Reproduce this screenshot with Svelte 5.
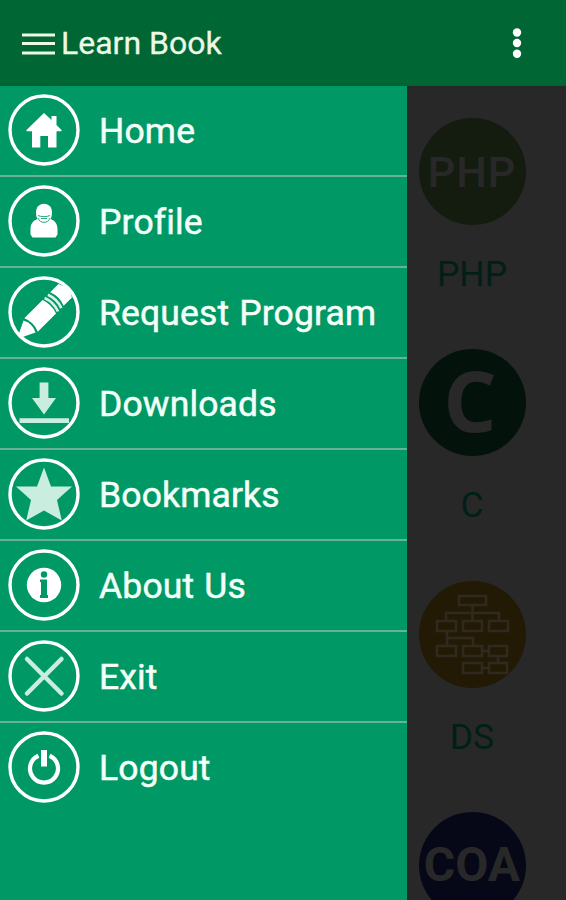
<script lang="ts">
  const items = [
    { name: 'Home', icon: 'home' },
    { name: 'Profile', icon: 'profile' },
    { name: 'Request Program', icon: 'pencil' },
    { name: 'Downloads', icon: 'download' },
    { name: 'Bookmarks', icon: 'star' },
    { name: 'About Us', icon: 'info' },
    { name: 'Exit', icon: 'exit' },
    { name: 'Logout', icon: 'power' }
  ];
</script>

<div class="app">
  <header>
    <svg class="burger" width="33" height="24" viewBox="0 0 33 24">
      <path d="M0 3H33M0 11.500H33M0 21H33" stroke="#eef8e6" stroke-width="2.800" />
    </svg>
    <h1>Learn Book</h1>
    <svg class="dots" width="10" height="32" viewBox="0 0 10 32" fill="#fff">
      <circle cx="5" cy="4.500" r="4.200" />
      <circle cx="5" cy="15" r="4.200" />
      <circle cx="5" cy="25.700" r="4.200" />
    </svg>
  </header>

  <main>
    <nav>
      {#each items as item}
        <div class="row">
          <svg width="72" height="72" viewBox="-36 -36 72 72" fill="#fff">
            <circle r="34" fill="none" stroke="#fff" stroke-width="3.400" />
            {#if item.icon === 'home'}
              <path d="M0-17L7.500-10V-14H12.500V-5L17.500 0V1.300H12.500V17.500H4V6H-3.700V17.500H-12V1.300H-17.500V0Z" />
            {:else if item.icon === 'profile'}
              <path d="M0-17.300C5-17.300 8-13.500 8-8.500C8-5 7-2 5.500-.3C3 2.500-3 2.500-5.500-.3C-7-2-8-5-8-8.500C-8-13.500-5-17.300 0-17.300Z" />
              <path d="M-6.500-2C-11-.5-13.500 3-13.500 8V13.500L-11.500 16.500H11.500L13.500 13.500V8C13.500 3 11-.5 6.500-2C4 2.800-4 2.800-6.500-2Z" />
              <path d="M-6-5.500C-3-4 3-4 6-5.500M-3-2.500H3M-6-3C-4 2.800 4 2.800 6-3" fill="none" stroke="#2ca87c" stroke-width="1" />
            {:else if item.icon === 'pencil'}
              <g transform="rotate(-45)">
                <path d="M-35-1.500L-20.500-8.500Q-16 0-20.500 8.500L-35 1.500Z" />
                <path d="M-18.300-9.500H7.500Q11 0 7.500 9.500H-18.300Q-14 0-18.300-9.500Z" />
                <path d="M10.300-9.500Q14 0 10.300 9.500M15-9.500Q18.700 0 15 9.500" fill="none" stroke="#d8f1e6" stroke-width="2.700" />
                <path d="M18.300-9.500H30Q33-4 33 0Q33 5 30 9.500H18.300Q22 0 18.300-9.500Z" />
              </g>
            {:else if item.icon === 'download'}
              <path class="pale" d="M-4.400-20.500H4.400V-5H12L0 11.500L-12-5H-4.400ZM-24.500 15.200H25V20H-24.500Z" />
            {:else if item.icon === 'star'}
              <path class="pale" d="M0-26.500L7-7.500H28L13 6L17.800 26.500L0 16.500L-17.800 26.500L-13 6L-28-7.500H-7Z" />
            {:else if item.icon === 'info'}
              <circle r="17.200" />
              <circle cy="-10.500" r="3.200" fill="#096" />
              <path d="M-4-5.500H3V10H4V13H-4V10H-3V-3H-4Z" fill="#096" />
            {:else if item.icon === 'exit'}
              <path d="M-17-17L17.500 17.500M17.500-17L-17 17.500" stroke="#c9eedf" stroke-width="4.500" stroke-linecap="round" />
            {:else}
              <path d="M-5.500-11.300A14 14 0 1 0 5.500-11.300" fill="none" stroke="#fff" stroke-width="4.200" />
              <path d="M-3-17H3V-.5H-3Z" />
            {/if}
          </svg>
          <span>{item.name}</span>
        </div>
      {/each}
    </nav>

    <section>
      <div class="course">
        <div class="disc php">PHP</div>
        <p>PHP</p>
      </div>
      <div class="course">
        <div class="disc c">C</div>
        <p>C</p>
      </div>
      <div class="course">
        <div class="disc ds">
          <svg width="106" height="106" viewBox="0 0 106 106" fill="none" stroke="#30291f" stroke-width="2.600">
            <path d="M40 15H67V24H40ZM18 40H37V50H18ZM44 40H63V50H44ZM70 40H89V50H70ZM18 65H37V75H18ZM44 65H63V75H44ZM70 65H88V75H70ZM44 82H63V92H44ZM70 82H88V92H70Z" />
            <path d="M53.500 24V40M27 40V32H80V40M28 50V65M28 57H54V65M63 70H70M79 75V82M63 87H70" />
          </svg>
        </div>
        <p>DS</p>
      </div>
      <div class="course">
        <div class="disc coa">COA</div>
      </div>
    </section>
  </main>
</div>

<style>
  :global(body) {
    background: #282828;
    overflow: hidden;
  }
  .app {
    display: flex;
    flex-direction: column;
    width: 566px;
    height: 900px;
    overflow: hidden;
    font-family: Roboto, "Liberation Sans", sans-serif;
  }
  header {
    display: flex;
    flex: none;
    align-items: center;
    box-sizing: border-box;
    height: 86px;
    padding: 2px 44px 0 22px;
    background: #063;
    border-bottom: 1px solid #005f38;
  }
  h1 {
    margin: 0 auto 0 6px;
    padding-bottom: 1px;
    color: #eef8e6;
    font-size: 32px;
    font-weight: 400;
    line-height: 40px;
    -webkit-text-stroke: 0.3px #eef8e6;
  }
  main {
    display: flex;
    flex: 1;
    min-height: 0;
  }
  nav {
    width: 407px;
    flex: none;
    background: #096;
  }
  .row {
    display: flex;
    align-items: center;
    gap: 19px;
    height: 89px;
    padding-left: 8px;
    border-bottom: 2px solid #69b194;
    color: #f4fff8;
    font-size: 35.5px;
    line-height: 42px;
    white-space: nowrap;
  }
  .row:last-child {
    border-bottom: none;
  }
  .row svg {
    margin-bottom: 1px;
  }
  .row span {
    letter-spacing: 0.15px;
    word-spacing: 1px;
    -webkit-text-stroke: 0.5px #f4fff8;
  }
  .pale {
    fill: #c9eedf;
  }
  section {
    flex: 1;
    padding: 32px 29px 0 0;
    background: #282828;
    overflow: hidden;
  }
  .course {
    display: flex;
    flex-direction: column;
    align-items: center;
    height: 231.3px;
  }
  .disc {
    display: flex;
    flex: none;
    align-items: center;
    justify-content: center;
    box-sizing: border-box;
    width: 107px;
    height: 107px;
    border-radius: 50%;
    color: #282828;
  }
  .php {
    background: #141c10;
    font-size: 43px;
    letter-spacing: 1px;
    font-weight: 500;
  }
  .c {
    padding: 0 4px 6px 0;
    background: #04120c;
    font-family: "Open Sans", sans-serif;
    font-size: 84px;
    font-weight: 700;
    line-height: 100px;
  }
  .ds {
    background: #231a05;
  }
  .coa {
    padding-bottom: 1px;
    background: #060818;
    font-size: 48px;
    font-weight: 700;
    line-height: 50px;
  }
  p {
    margin: 28px 0 0;
    color: #021f17;
    font-size: 35.5px;
    line-height: 42px;
  }
</style>
